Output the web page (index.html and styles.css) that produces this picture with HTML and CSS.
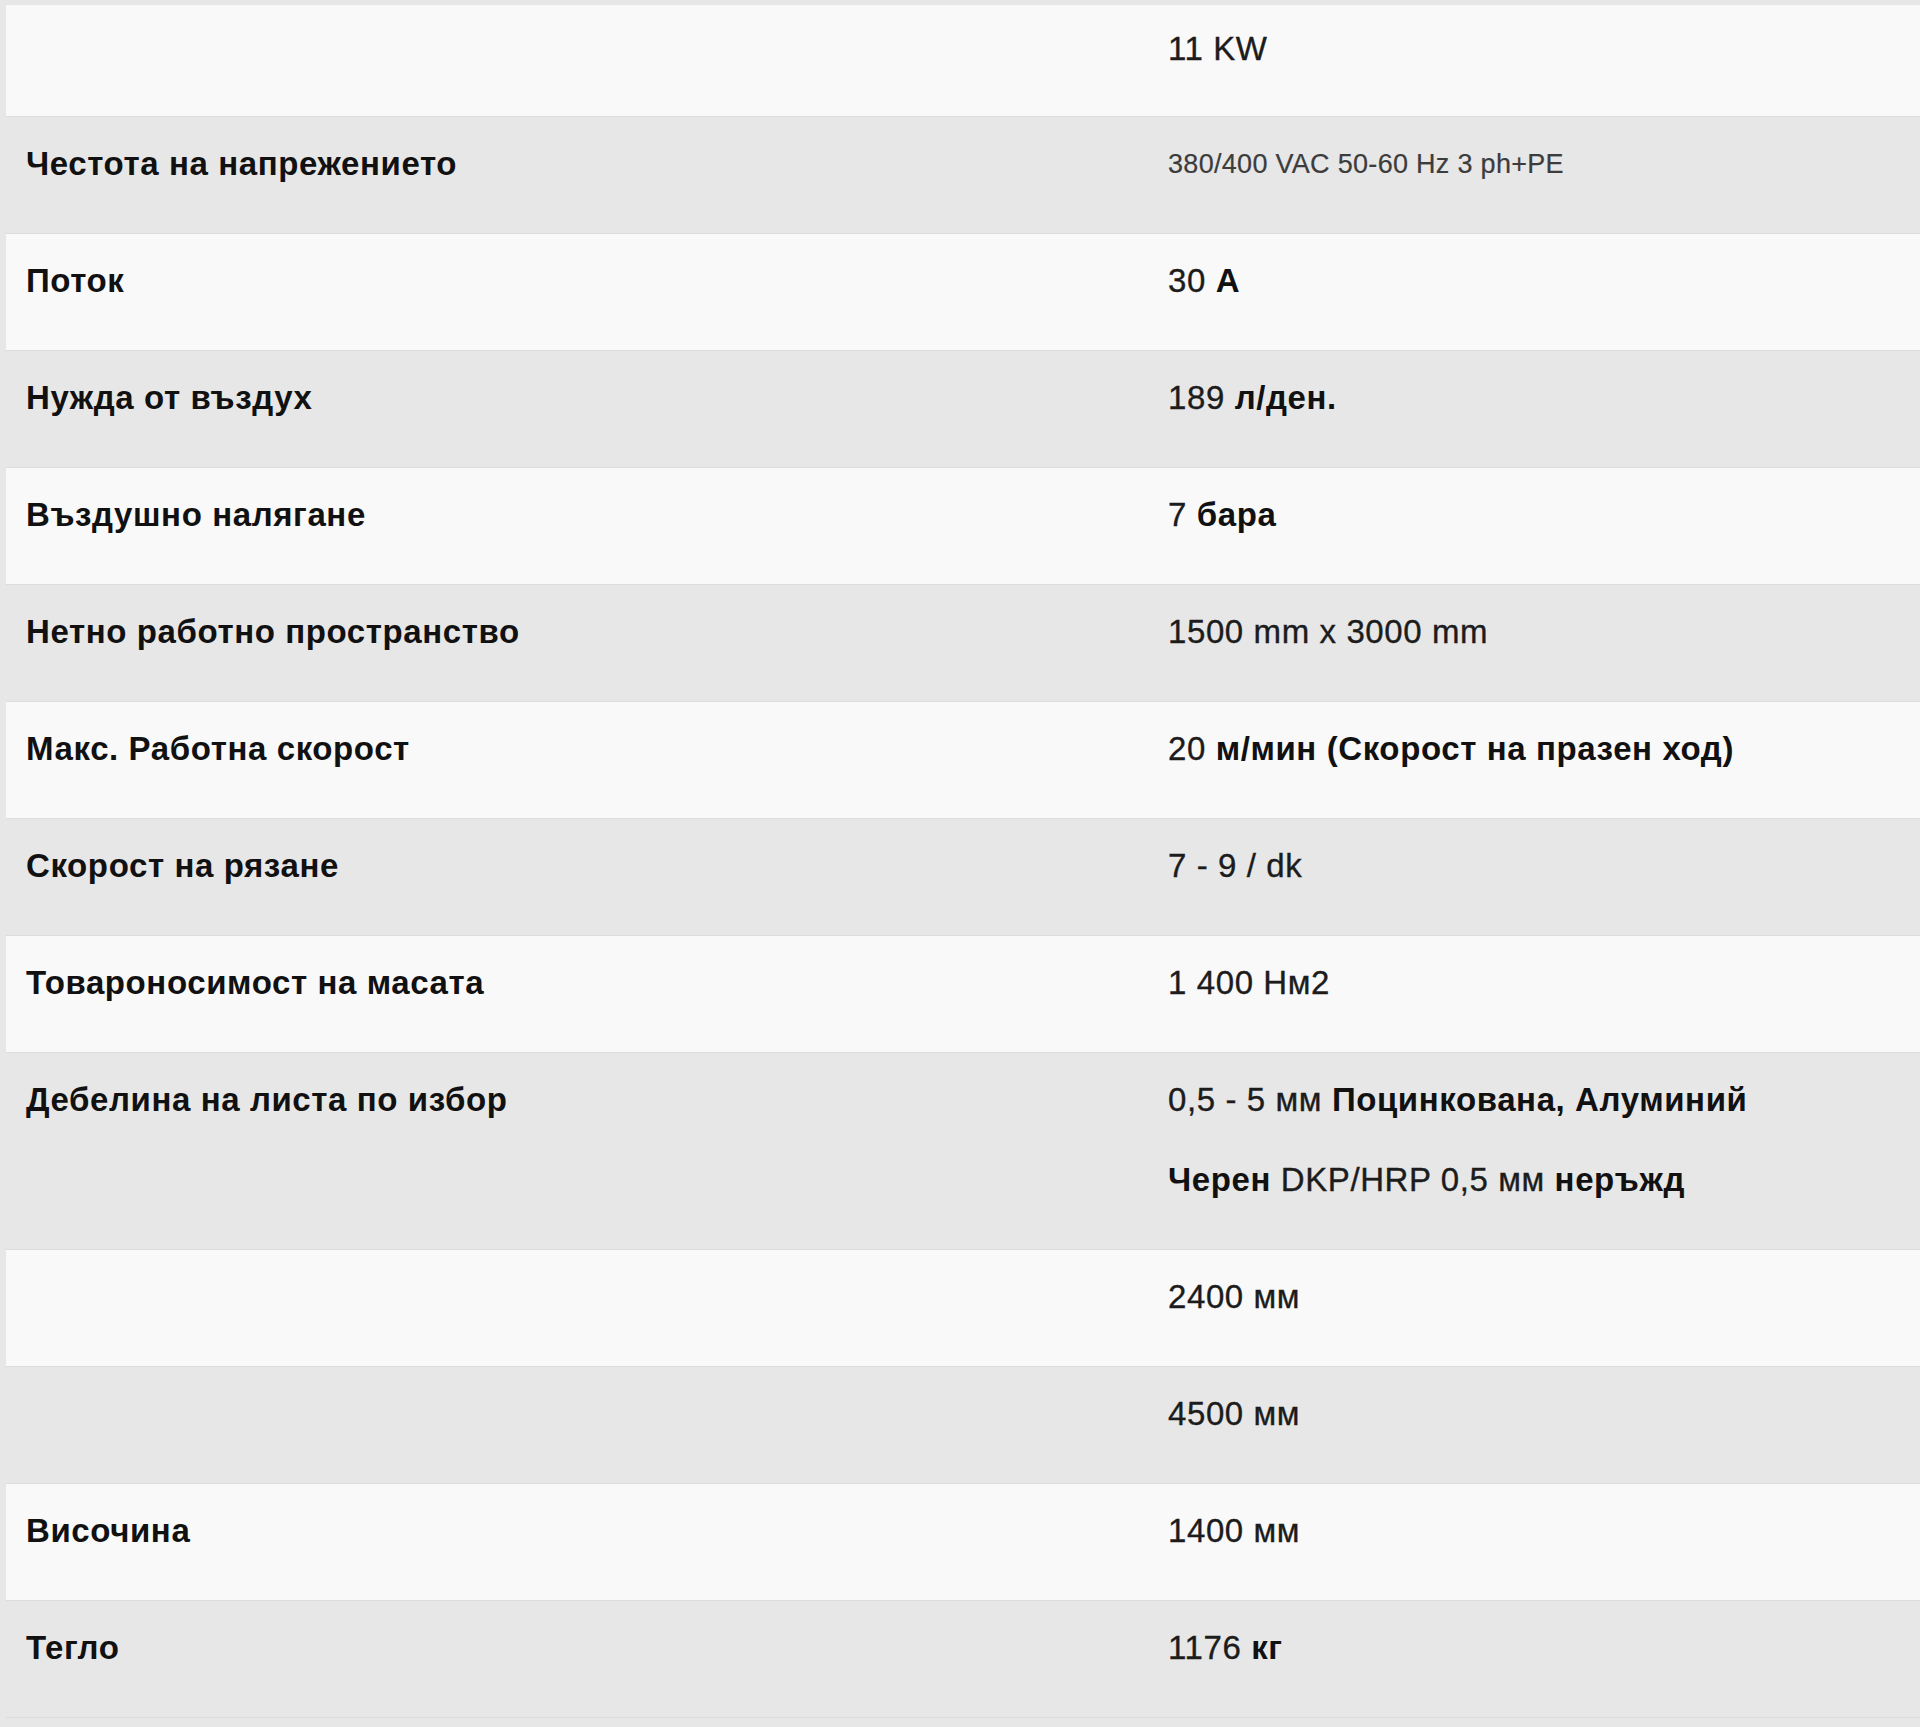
FILE: index.html
```html
<!DOCTYPE html>
<html lang="bg">
<head>
<meta charset="utf-8">
<title>Технически характеристики</title>
<link rel="stylesheet" href="styles.css">
</head>
<body>
<div class="specs">
  <div class="row light first">
    <div class="label"></div>
    <div class="value"><p>11 KW</p></div>
  </div>
  <div class="row dark">
    <div class="label"><p>Честота на напрежението</p></div>
    <div class="value"><p class="small">380/400 VAC 50-60 Hz 3 ph+PE</p></div>
  </div>
  <div class="row light">
    <div class="label"><p>Поток</p></div>
    <div class="value"><p>30 <b>А</b></p></div>
  </div>
  <div class="row dark">
    <div class="label"><p>Нужда от въздух</p></div>
    <div class="value"><p>189 <b>л/ден.</b></p></div>
  </div>
  <div class="row light">
    <div class="label"><p>Въздушно налягане</p></div>
    <div class="value"><p>7 <b>бара</b></p></div>
  </div>
  <div class="row dark">
    <div class="label"><p>Нетно работно пространство</p></div>
    <div class="value"><p>1500 mm x 3000 mm</p></div>
  </div>
  <div class="row light">
    <div class="label"><p>Макс. Работна скорост</p></div>
    <div class="value"><p>20 <b>м/мин (Скорост на празен ход)</b></p></div>
  </div>
  <div class="row dark">
    <div class="label"><p>Скорост на рязане</p></div>
    <div class="value"><p>7 - 9 / dk</p></div>
  </div>
  <div class="row light">
    <div class="label"><p>Товароносимост на масата</p></div>
    <div class="value"><p>1 400 Нм2</p></div>
  </div>
  <div class="row dark">
    <div class="label"><p>Дебелина на листа по избор</p></div>
    <div class="value">
      <p>0,5 - 5 мм <b>Поцинкована, Алуминий</b></p>
      <p><b>Черен</b> DKP/HRP 0,5 мм <b>неръжд</b></p>
    </div>
  </div>
  <div class="row light">
    <div class="label"></div>
    <div class="value"><p>2400 мм</p></div>
  </div>
  <div class="row dark">
    <div class="label"></div>
    <div class="value"><p>4500 мм</p></div>
  </div>
  <div class="row light">
    <div class="label"><p>Височина</p></div>
    <div class="value"><p>1400 мм</p></div>
  </div>
  <div class="row dark">
    <div class="label"><p>Тегло</p></div>
    <div class="value"><p>1176 <b>кг</b></p></div>
  </div>
</div>
</body>
</html>
```

FILE: styles.css
```css
html, body {
  margin: 0;
  padding: 0;
}

body {
  background: #e7e7e7;
  font-family: "Liberation Sans", Arial, sans-serif;
  color: #151515;
}

.specs {
  margin-left: 6px;
  display: flex;
  flex-direction: column;
}

.row {
  display: grid;
  grid-template-columns: 1142px 1fr;
  padding: 23px 0 13px;
  border-bottom: 1px solid #dcdcdc;
}

.row.first {
  border-top: 5px solid #e7e7e7;
  padding-top: 20px;
  padding-bottom: 11px;
}

.light {
  background: #f9f9f9;
}

.dark {
  background: #e7e7e7;
}

.label,
.value {
  padding: 0 20px;
  min-height: 80px;
}

.label p,
.value p {
  margin: 0 0 32px;
  font-size: 33px;
  line-height: 48px;
  letter-spacing: 0.6px;
  white-space: nowrap;
}

.label p {
  font-weight: 700;
  color: #111;
}

.value p {
  font-weight: 400;
  color: #1c1c1c;
  -webkit-text-stroke: 0.35px #1c1c1c;
}

.value b {
  font-weight: 700;
  color: #111;
  -webkit-text-stroke: 0;
}

.value p.small {
  font-size: 27px;
  letter-spacing: 0.3px;
  color: #3c3c3c;
  -webkit-text-stroke: 0.2px #3c3c3c;
}
```
